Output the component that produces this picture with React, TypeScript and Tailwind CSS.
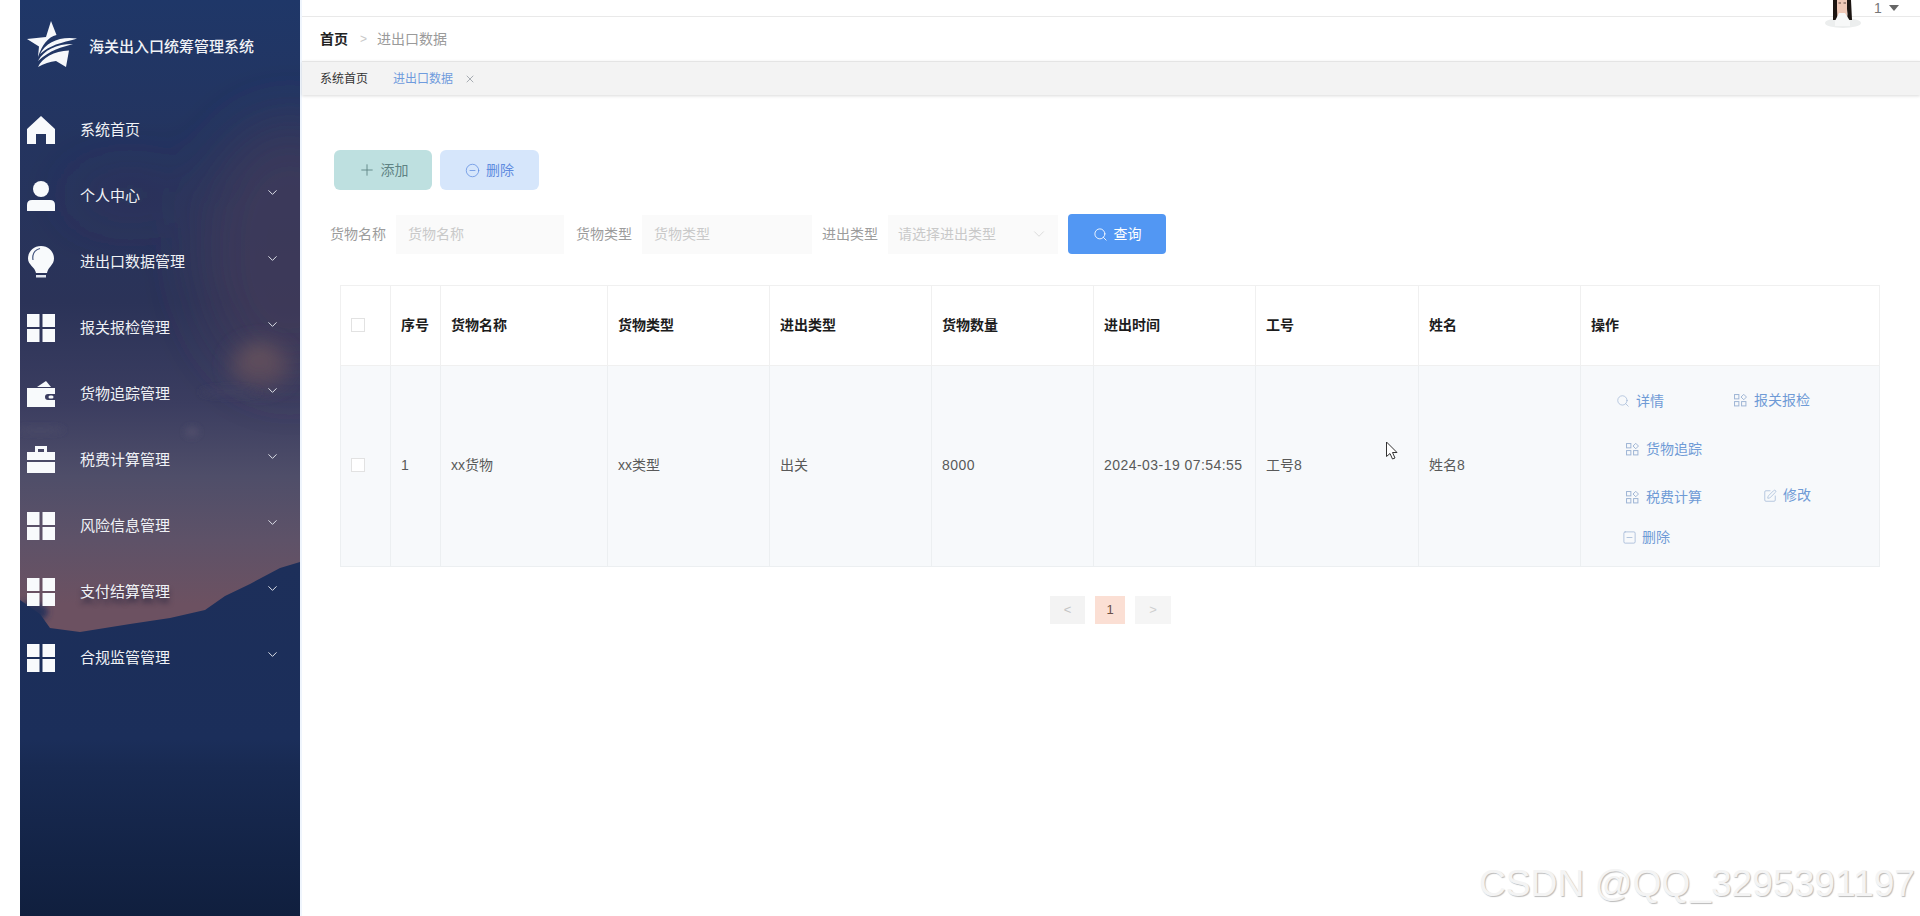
import React from "react";
import { ChevronDown, Plus, CircleMinus, Search, SquarePen, SquareMinus, X } from "lucide-react";

const FONT = '"Liberation Sans","Noto Sans CJK SC",sans-serif';

function GridIcon() {
  return (
    <svg viewBox="0 0 28 28" className="w-7 h-7" fill="#f8fafc">
      <rect x="0" y="0" width="12.500" height="13" />
      <rect x="15.500" y="0" width="12.500" height="13" />
      <rect x="0" y="15" width="12.500" height="13" />
      <rect x="15.500" y="15" width="12.500" height="13" />
    </svg>
  );
}
function HomeIcon() {
  return (
    <svg viewBox="0 0 28 28" className="w-7 h-7" fill="#f8fafc">
      <path d="M14 0 L28 13 V28 H19 V18 H9 V28 H0 V13 Z" />
    </svg>
  );
}
function UserIcon() {
  return (
    <svg viewBox="0 0 28 30" className="w-7 h-[30px]" fill="#f8fafc">
      <circle cx="14" cy="8" r="8" />
      <path d="M5 19 H23 Q28 19 28 24 V30 H0 V24 Q0 19 5 19 Z" />
    </svg>
  );
}
function BulbIcon() {
  return (
    <svg viewBox="0 0 28 32" className="w-7 h-8">
      <path d="M14 0 C22 0 27 6 27 12.500 C27 19 21 21 20 27 H9 C8 21 1 19 1 12.500 C1 6 6 0 14 0 Z" fill="#f8fafc" />
      <path d="M6 14 C5 8 8 4 13 2.500" stroke="#44557f" strokeWidth="1.200" fill="none" />
      <rect x="9" y="29" width="10" height="2.500" fill="#dfe4ee" />
    </svg>
  );
}
function WalletIcon() {
  return (
    <svg viewBox="0 0 28 28" className="w-7 h-7" fill="#f8fafc">
      <path d="M10 7 L19 1 L24 7 Z" />
      <path fillRule="evenodd" d="M0 8 H28 V14 H21 A3 3 0 0 0 21 20 H28 V27 H0 Z" />
      <rect x="21.500" y="15.500" width="5" height="3" rx="1.500" />
    </svg>
  );
}
function CaseIcon() {
  return (
    <svg viewBox="0 0 28 28" className="w-7 h-7" fill="#f8fafc">
      <path fillRule="evenodd" d="M8 0 H20 V6 H28 V14 H0 V6 H8 Z M11 3 V6 H17 V3 Z" />
      <rect x="0" y="16" width="28" height="11" />
    </svg>
  );
}
function LogoStar() {
  return (
    <svg viewBox="7 6 50 48" className="w-[50px] h-[48px]" fill="#f6f8fb">
      <path d="M31 7 L36.500 21 C28 23 22 31 18 43 L19 32.500 L7 25 L26 23 Z" />
      <path d="M20 40 C26 28 40 22 57 24.500 C50 27.500 34 28 20 40 Z" />
      <path d="M18 47 C24 36 36 30 53 30 C42 33 30 36 18 47 Z" />
      <path d="M18 53 C22 44 34 37 49 36.500 L46 53 L36 47 C30 47.500 24 49.500 18 53 Z" />
    </svg>
  );
}
function OpIcon() {
  return (
    <svg viewBox="0 0 12 12" className="w-[13px] h-[13px]" fill="none" stroke="currentColor" strokeWidth="0.900">
      <rect x="0.500" y="0.500" width="4" height="4" />
      <rect x="0.500" y="7" width="4" height="4" />
      <rect x="7" y="7" width="4" height="4" />
      <path d="M9 0.300 L11.500 2.800 L9 5.300 L6.500 2.800 Z" />
    </svg>
  );
}

const MENU: { label: string; icon: React.ReactNode; chevron?: boolean; shadow?: boolean }[] = [
  { label: "系统首页", icon: <HomeIcon /> },
  { label: "个人中心", icon: <UserIcon />, chevron: true },
  { label: "进出口数据管理", icon: <BulbIcon />, chevron: true },
  { label: "报关报检管理", icon: <GridIcon />, chevron: true },
  { label: "货物追踪管理", icon: <WalletIcon />, chevron: true },
  { label: "税费计算管理", icon: <CaseIcon />, chevron: true },
  { label: "风险信息管理", icon: <GridIcon />, chevron: true },
  { label: "支付结算管理", icon: <GridIcon />, chevron: true, shadow: true },
  { label: "合规监管管理", icon: <GridIcon />, chevron: true },
];

function SidebarPhoto() {
  return (
    <svg className="absolute inset-0 w-full h-full" viewBox="0 0 280 916" preserveAspectRatio="none">
      <defs>
        <linearGradient id="sky" x1="0" y1="0" x2="0" y2="1">
          <stop offset="0" stopColor="#1f3768" />
          <stop offset="0.16" stopColor="#24345f" />
          <stop offset="0.33" stopColor="#2b3358" />
          <stop offset="0.44" stopColor="#3b3d60" />
          <stop offset="0.52" stopColor="#4f4e69" />
          <stop offset="0.59" stopColor="#5e5268" />
          <stop offset="0.66" stopColor="#6c5161" />
          <stop offset="1" stopColor="#6c5161" />
        </linearGradient>
        <linearGradient id="sea" x1="0" y1="0" x2="0" y2="1">
          <stop offset="0" stopColor="#1d2f5a" />
          <stop offset="0.5" stopColor="#1b2e5a" />
          <stop offset="0.58" stopColor="#182a52" />
          <stop offset="1" stopColor="#101f3e" />
        </linearGradient>
        <filter id="b1" x="-50%" y="-50%" width="200%" height="200%">
          <feGaussianBlur stdDeviation="28" />
        </filter>
        <filter id="b2" x="-50%" y="-50%" width="200%" height="200%">
          <feGaussianBlur stdDeviation="10" />
        </filter>
        <filter id="b3" x="-50%" y="-50%" width="200%" height="200%">
          <feGaussianBlur stdDeviation="3" />
        </filter>
      </defs>
      <rect width="280" height="916" fill="url(#sky)" />
      <g filter="url(#b1)">
        <ellipse cx="270" cy="250" rx="90" ry="130" fill="#4a3b58" fillOpacity="0.600" />
        <ellipse cx="110" cy="195" rx="60" ry="16" fill="#3c3456" fillOpacity="0.500" />
      </g>
      <g filter="url(#b2)">
        <ellipse cx="240" cy="365" rx="30" ry="22" fill="#5f4c5c" fillOpacity="0.850" />
        <ellipse cx="238" cy="352" rx="13" ry="8" fill="#6f5a5e" fillOpacity="0.700" />
      </g>
      <g filter="url(#b3)">
        <ellipse cx="210" cy="392" rx="30" ry="5" fill="#3f3f60" fillOpacity="0.600" />
        <ellipse cx="172" cy="432" rx="7" ry="5" fill="#54536e" fillOpacity="0.700" />
        <ellipse cx="20" cy="430" rx="24" ry="3" fill="#4c4c68" fillOpacity="0.700" />
        <ellipse cx="10" cy="612" rx="18" ry="10" fill="#26305a" />
      </g>
      <path d="M0 600 L20 614 L30 628 L60 632 L110 624 L150 618 L185 610 L205 596 L230 584 L260 568 L280 562 V916 H0 Z" fill="url(#sea)" />
    </svg>
  );
}

const HEADERS = ["序号", "货物名称", "货物类型", "进出类型", "货物数量", "进出时间", "工号", "姓名", "操作"];
const ROW = ["1", "xx货物", "xx类型", "出关", "8000", "2024-03-19 07:54:55", "工号8", "姓名8"];
const WIDTHS = ["w-[50px]", "w-[50px]", "w-[167px]", "w-[162px]", "w-[162px]", "w-[162px]", "w-[162px]", "w-[163px]", "w-[162px]", "w-[299px]"];

function OpLink({ icon, text, gap = "gap-[7px]" }: { icon: React.ReactNode; text: string; gap?: string }) {
  return (
    <span className={`inline-flex items-center ${gap} text-[14px] text-[#6f9bd6] whitespace-nowrap`}>
      <span className="text-[#9db4d4]">{icon}</span>
      {text}
    </span>
  );
}

function Avatar() {
  return (
    <svg viewBox="0 0 36 28" className="absolute left-[1525px] top-0 w-9 h-7">
      <ellipse cx="18" cy="23" rx="18" ry="5" fill="#eceeee" />
      <rect x="12" y="0" width="10" height="16" fill="#efc9b8" />
      <path d="M8 0 H12 V9 Q12 16 13 20 H8 Z" fill="#1c1512" />
      <path d="M22 0 H26 L27 20 H22 Q23 14 22 9 Z" fill="#1c1512" />
      <path d="M10 21 L14 13 H20 L25 21 V26 H10 Z" fill="#f7f8f8" />
      <path d="M13.500 3 H16 M18.500 3 H21" stroke="#3a2a24" strokeWidth="0.800" />
    </svg>
  );
}

export default function App() {
  return (
    <div className="relative flex w-[1920px] h-[916px] overflow-hidden bg-white pl-5" style={{ fontFamily: FONT }}>
      <aside className="relative w-[280px] h-full shrink-0 bg-[#1f3768] text-[#f0f2f6]">
        <SidebarPhoto />
        <div className="relative">
          <div className="h-[97px] flex items-start pt-5 pl-[7px] gap-3">
            <LogoStar />
            <span className="text-[15px] leading-[48px] mt-[3px] font-[500] whitespace-nowrap">海关出入口统筹管理系统</span>
          </div>
          {MENU.map((m) => (
            <div key={m.label} className="h-[66px] flex items-center pl-[7px] pr-[20px]">
              <span className="w-7 flex justify-center shrink-0">{m.icon}</span>
              <span className={`ml-[25px] flex-1 text-[15px] whitespace-nowrap ${m.shadow ? "[text-shadow:0_5px_5px_rgba(20,25,50,0.65)]" : ""}`}>{m.label}</span>
              {m.chevron && <ChevronDown className="w-[15px] h-[15px] mb-[7px] text-[#dfe2ea]" strokeWidth={1.6} />}
            </div>
          ))}
        </div>
      </aside>

      <main className="flex-1 min-w-0 border-l-2 border-[#eff5fd]">
        <div className="h-[17px] border-b border-[#e9e9e9]" />
        <div className="h-[44px] flex items-center pl-[18px] text-[14px]">
          <span className="font-bold text-[#222]">首页</span>
          <span className="ml-[12px] mr-[10px] text-[#c8c8c8] text-[12px]">&gt;</span>
          <span className="text-[#9a9a9a]">进出口数据</span>
        </div>
        <div className="h-[34px] flex items-center pl-[18px] bg-[#f3f3f3] border-t border-[#e4e4e4] shadow-[0_1px_3px_rgba(0,0,0,0.15)] text-[12px]">
          <span className="text-[#333]">系统首页</span>
          <span className="ml-[25px] text-[#6f9bdd]">进出口数据</span>
          <X className="ml-[11px] w-[12px] h-[12px] text-[#8f959d]" strokeWidth={1.5} />
        </div>

        <div className="pt-[55px] pl-[32px]">
          <div className="flex gap-2">
            <button className="w-[98px] h-10 rounded-[6px] bg-[#bee0e0] text-[#5f8384] text-[14px] flex items-center justify-center gap-[5px]">
              <Plus className="w-[18px] h-[18px]" strokeWidth={1.2} />
              添加
            </button>
            <button className="w-[99px] h-10 rounded-[6px] bg-[#d6e6fb] text-[#5f8ce0] text-[14px] flex items-center justify-center gap-[6px]">
              <CircleMinus className="w-[15px] h-[15px]" strokeWidth={1.2} />
              删除
            </button>
          </div>

          <div className="flex items-center mt-6 -ml-1 h-10 text-[14px] text-[#9c9c9c]">
            <span className="w-[56px] whitespace-nowrap">货物名称</span>
            <input readOnly placeholder="货物名称" className="ml-[10px] w-[168px] h-[39px] px-[12px] bg-[#fafafa] outline-none placeholder:text-[#c9c9c9]" />
            <span className="ml-[12px] w-[56px] whitespace-nowrap">货物类型</span>
            <input readOnly placeholder="货物类型" className="ml-[10px] w-[170px] h-[39px] px-[12px] bg-[#fafafa] outline-none placeholder:text-[#c9c9c9]" />
            <span className="ml-[10px] w-[56px] whitespace-nowrap">进出类型</span>
            <div className="ml-[10px] w-[170px] h-[39px] px-[10px] bg-[#fafafa] flex items-center justify-between text-[#c9c9c9]">
              <span className="whitespace-nowrap">请选择进出类型</span>
              <ChevronDown className="w-[18px] h-[18px] text-[#d8d8d8]" strokeWidth={1.2} />
            </div>
            <button className="ml-[10px] w-[98px] h-10 rounded-[4px] bg-[#5297f3] text-white flex items-center justify-center gap-[6px]">
              <Search className="w-[15px] h-[15px]" strokeWidth={1.4} />
              查询
            </button>
          </div>

          <table className="mt-[31px] ml-[6px] w-[1538px] table-fixed border-collapse text-[14px]">
            <thead>
              <tr className="h-[80px] bg-white">
                <th className={`${WIDTHS[0]} border border-[#f0f0f0] text-left pl-[10px]`}>
                  <span className="block w-[14px] h-[14px] -mt-[2px] border border-[#e2e2e2] bg-white" />
                </th>
                {HEADERS.map((h, i) => (
                  <th key={h} className={`${WIDTHS[i + 1]} border border-[#f0f0f0] text-left pl-[10px] font-bold text-[#1c1c1c]`}>
                    {h}
                  </th>
                ))}
              </tr>
            </thead>
            <tbody>
              <tr className="h-[200px] bg-[#f7f9fb] text-[#595959]">
                <td className="border border-[#ecEFf1] pl-[10px] pb-[2px]">
                  <span className="block w-[14px] h-[14px] border border-[#e2e2e2] bg-white" />
                </td>
                {ROW.map((c) => (
                  <td key={c} className={`border border-[#ecEFf1] pl-[10px] pb-[2px] whitespace-nowrap ${/\d{4}/.test(c) ? "tracking-[0.45px]" : ""}`}>{c}</td>
                ))}
                <td className="border border-[#ecEFf1] p-0 align-top">
                  <div className="flex flex-col pt-[23px] h-[200px]">
                    <div className="flex h-[24px] items-center pl-[35px]">
                      <OpLink icon={<Search className="w-[14px] h-[14px]" strokeWidth={1.2} />} text="详情" gap="gap-[6px]" />
                      <span className="ml-[70px]"><OpLink icon={<OpIcon />} text="报关报检" /></span>
                    </div>
                    <div className="flex h-[24px] mt-[24px] items-center pl-[45px]">
                      <OpLink icon={<OpIcon />} text="货物追踪" />
                    </div>
                    <div className="flex h-[24px] mt-[24px] items-center pl-[45px]">
                      <OpLink icon={<OpIcon />} text="税费计算" />
                      <span className="ml-[61px]"><OpLink icon={<SquarePen className="w-[14px] h-[14px]" strokeWidth={1.2} />} text="修改" gap="gap-[6px]" /></span>
                    </div>
                    <div className="flex h-[24px] mt-[16px] items-center pl-[41px]">
                      <OpLink icon={<SquareMinus className="w-[15px] h-[15px]" strokeWidth={1.2} />} text="删除" gap="gap-[5px]" />
                    </div>
                  </div>
                </td>
              </tr>
            </tbody>
          </table>

          <div className="mt-[29px] ml-[716px] flex items-center gap-[10px] text-[13px]">
            <span className="w-[35px] h-[28px] bg-[#f3f3f3] text-[#c4c4c4] flex items-center justify-center">&lt;</span>
            <span className="w-[30px] h-[28px] bg-[#fbdfd4] text-[#6b5048] flex items-center justify-center">1</span>
            <span className="w-[36px] h-[28px] bg-[#f5f5f5] text-[#cfcfcf] flex items-center justify-center">&gt;</span>
          </div>
        </div>
      </main>

      {/* overlays */}
      <div className="absolute left-[300px] top-0">
        <Avatar />
        <span className="absolute left-[1574px] top-[-2px] text-[14px] text-[#777]">1</span>
        <span className="absolute left-[1589px] top-[5px] w-0 h-0 border-l-[5px] border-r-[5px] border-t-[6px] border-l-transparent border-r-transparent border-t-[#666]" />
      </div>
      <svg viewBox="0 0 14 20" className="absolute left-[1385px] top-[441px] w-[14px] h-5" fill="#fff" stroke="#333" strokeWidth="1">
        <path d="M1.500 1 V15.500 L5 12.500 L7.500 18 L10 17 L7.500 11.500 L12 11.500 Z" />
      </svg>
      <span className="absolute right-[5px] top-[862px] text-[37.200px] leading-[42px] text-[#f4f4f4] whitespace-nowrap [text-shadow:1px_1px_1px_#bbbbbb]">
        CSDN @QQ_3295391197
      </span>
    </div>
  );
}
